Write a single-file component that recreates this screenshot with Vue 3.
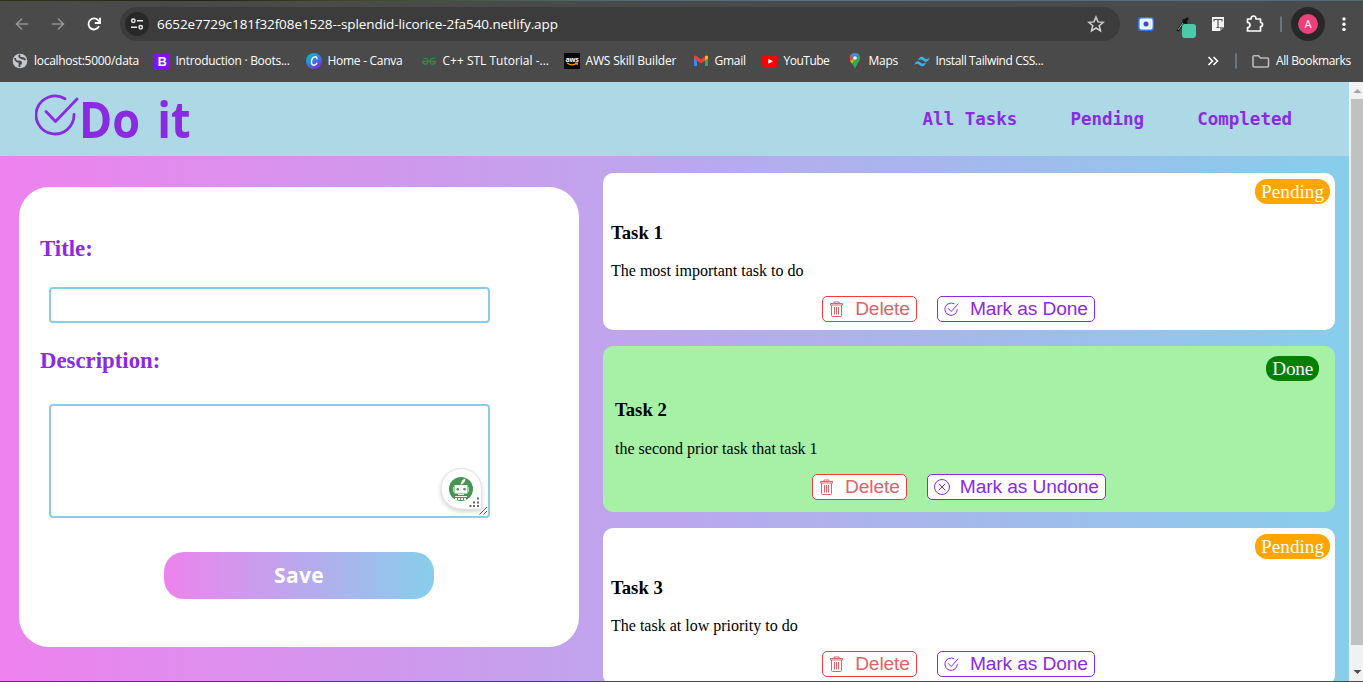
<script setup>
const bookmarks = [
  { icon: 'globe', text: 'localhost:5000/data' },
  { icon: 'boot', text: 'Introduction · Boots...' },
  { icon: 'canva', text: 'Home - Canva' },
  { icon: 'geeks', text: 'C++ STL Tutorial -...' },
  { icon: 'aws', text: 'AWS Skill Builder' },
  { icon: 'gmail', text: 'Gmail' },
  { icon: 'youtube', text: 'YouTube' },
  { icon: 'maps', text: 'Maps' },
  { icon: 'tailwind', text: 'Install Tailwind CSS...' },
]
const tasks = [
  { title: 'Task 1', text: 'The most important task to do', done: false },
  { title: 'Task 2', text: 'the second prior task that task 1', done: true },
  { title: 'Task 3', text: 'The task at low priority to do', done: false },
]
</script>

<template>
  <div class="window">
    <header class="chrome">
      <div class="strip"></div>
      <div class="toolbar">
        <svg class="nav-icons" width="120" height="34" viewBox="0 0 120 34" fill="none">
          <path d="M28 17H17M22 11.500L16.500 17L22 22.500" stroke="#929292" stroke-width="1.600" />
          <path d="M52 17H63M58 11.500L63.500 17L58 22.500" stroke="#929292" stroke-width="1.600" />
          <path d="M99 19.200A5.500 5.500 0 1 1 98 13.200L99.500 15" stroke="#fff" stroke-width="1.800" />
          <path d="M100 10.800V16H94.800" stroke="#fff" stroke-width="1.800" />
        </svg>
        <div class="address">
          <svg class="site" width="24" height="24" viewBox="0 0 24 24" fill="none">
            <circle cx="12" cy="12" r="12" fill="#282828" />
            <g stroke="#e8e8e8" stroke-width="1.500">
              <circle cx="8.300" cy="8.800" r="1.700" /><path d="M12 8.800H18M6 15.200H12" />
              <circle cx="15.700" cy="15.200" r="1.700" />
            </g>
          </svg>
          <span class="url">6652e7729c181f32f08e1528--splendid-licorice-2fa540.netlify.app</span>
          <svg class="star" width="18" height="18" viewBox="0 0 18 18"><path d="M9 2L11 6.900L16.200 7.300L12.200 10.700L13.500 15.800L9 13L4.500 15.800L5.800 10.700L1.800 7.300L7 6.900Z" fill="none" stroke="#d0d0d0" stroke-width="1.500" /></svg>
        </div>
        <svg class="extensions" width="243" height="34" viewBox="0 0 243 34" fill="none">
          <rect x="18.800" y="10.800" width="14.500" height="12.400" rx="2.500" fill="#fff" stroke="#2878f0" stroke-width="1.500" />
          <rect x="21" y="13.200" width="10" height="7.500" rx="1.500" fill="#e4efff" />
          <circle cx="26" cy="17" r="2.500" fill="#4648c8" />
          <path d="M57.500 24L64 15" stroke="#101816" stroke-width="2.600" /><path d="M58 23L63 16" stroke="#8ac4a0" />
          <path d="M63 12.500L67 16.500M65 14L68 11" stroke="#111" stroke-width="2.600" />
          <rect x="62" y="17" width="14" height="14" rx="3" fill="#4bc9a9" />
          <path d="M92 10H104V20L100 24H92Z" fill="#f4f4f4" /><path d="M104 20L100 24V20Z" fill="#888" />
          <path d="M94 14.500V12.500H102V14.500M98 12.500V20.500M96.500 20.500H99.500" stroke="#555" stroke-width="1.200" />
          <path d="M127.500 12H131Q131 9 133.500 9Q136 9 136 12H140.500V15.500Q142.500 15.500 142.500 17.500Q142.500 19.500 140.500 19.500V24H127.500V20.500Q130 20.500 130 18Q130 15.500 127.500 15.500Z" stroke="#fff" stroke-width="1.700" stroke-linejoin="round" />
          <path d="M161 9.500V25" stroke="#718292" stroke-width="1.600" />
          <circle cx="188" cy="17" r="17" fill="#282828" /><circle cx="188" cy="17" r="10" fill="#ec407a" />
          <text x="188" y="21" text-anchor="middle" font-family="Roboto, sans-serif" font-size="11" fill="#fff">A</text>
          <g fill="#fff"><circle cx="224" cy="12" r="1.700" /><circle cx="224" cy="17.200" r="1.700" /><circle cx="224" cy="22.400" r="1.700" /></g>
        </svg>
      </div>
      <div class="bookmarks">
        <div v-for="b in bookmarks" :key="b.text" class="bookmark" :class="b.icon">
          <svg width="16" height="16" viewBox="0 0 16 16" fill="none">
            <g v-if="b.icon === 'globe'"><circle cx="8" cy="8" r="7.300" fill="#c5c8cc" /><path d="M3 5Q3.500 9 7 8.500Q9.500 8.500 9 10.500H7.500V14M8 2Q6 4 9 5Q12 5 13.500 7" stroke="#484848" stroke-width="1.800" /></g>
            <g v-else-if="b.icon === 'boot'"><rect width="16" height="16" rx="1.500" fill="#7e13f8" /><text x="8" y="12.500" text-anchor="middle" font-family="Liberation Sans, sans-serif" font-size="12.500" font-weight="bold" fill="#fff">B</text></g>
            <g v-else-if="b.icon === 'canva'"><defs><linearGradient id="canva" x1="0" y1="0" x2=".7" y2="1"><stop stop-color="#00c4cc" /><stop offset=".5" stop-color="#2d8ade" /><stop offset="1" stop-color="#7d2ae8" /></linearGradient></defs><circle cx="8" cy="8" r="8" fill="url(#canva)" /><path d="M10.800 6.300Q11.400 4 9.300 3.800Q6.300 4 5.500 8Q5 12 8 12.200Q10 12.100 11.200 9.800" stroke="#fff" stroke-width="1.400" /></g>
            <g v-else-if="b.icon === 'geeks'" stroke="#2f8d46" stroke-width="1.300"><path d="M2.500 5.700Q7 4.500 7 8.500Q6.500 11.500 4 11Q1.500 10.500 1.500 8.400H14.500Q14.500 10.500 12 11Q9.500 11.500 9 8.500Q9 4.500 13.500 5.700" /></g>
            <g v-else-if="b.icon === 'aws'"><rect width="16" height="16" fill="#07080c" /><text x="8" y="8.600" text-anchor="middle" font-family="Open Sans, sans-serif" font-size="7" font-weight="bold" fill="#fff">aws</text><path d="M3 10Q8 13.500 13 10.300M11 10H13.500L13 12" stroke="#ff9900" stroke-width="1.200" /></g>
            <g v-else-if="b.icon === 'gmail'"><path d="M1 4V13H4V7.500Z" fill="#4285f4" /><path d="M12 7.500V13H15V4Z" fill="#34a853" /><path d="M1 3.200Q2 2 3.500 3L8 6.500L12 3.300V7.500L8 10.500L1 5.300Z" fill="#ea4335" /><path d="M12 3.300Q14 1.800 15 3.500V5.500L12 7.500Z" fill="#fbbc04" /></g>
            <g v-else-if="b.icon === 'youtube'"><rect y="2.500" width="16" height="11.500" rx="2.500" fill="#f00" /><path d="M6.300 5.700L11 8.200L6.300 10.700Z" fill="#fff" /></g>
            <g v-else-if="b.icon === 'maps'"><path d="M8 0Q13 0 13.200 5Q13 8 10.500 10.500Q9 13 8 16Q7 13 5 10.500Q3 8 2.800 5Q3 0 8 0" fill="#34a853" /><path d="M4 2L8 5L5 10.500Q2.500 7.500 2.800 4.500Z" fill="#fbbc04" /><path d="M3.900 2L7 5L3.700 8.500Q2 5 3.900 2" fill="#ea4335" /><path d="M4 2Q8 -2 12 2L6.500 7Z" fill="#4285f4" /><circle cx="8" cy="5" r="1.800" fill="#eef3ff" /></g>
            <path v-else d="M4 7.500Q5 3.500 8.200 3.700Q10 4.500 11 5.700Q13 7 15.800 4.500Q14.500 9 11.500 8.700Q9.500 8 8.500 7Q6.300 5.600 4 7.500M.2 12Q1.500 8 4.500 8.200Q6.300 9 7.300 10.200Q9.500 11.500 12 9Q11 13.500 7.800 13.200Q6 12.500 5 11.400Q3 10 .2 12" fill="#38b5ef" />
          </svg>
          <span>{{ b.text }}</span>
        </div>
        <svg class="overflow" width="70" height="20" viewBox="0 0 70 20" fill="none">
          <path d="M6.500 6L10.500 10L6.500 14M11.500 6L15.500 10L11.500 14" stroke="#fff" stroke-width="1.600" />
          <path d="M34 2.500V17.500" stroke="#718292" stroke-width="1.600" />
          <path d="M52 4.800H56.500L58.500 7H65.500Q66.500 7 66.500 8V15Q66.500 16 65.500 16H52Q51 16 51 15V5.800Q51 4.800 52 4.800" stroke="#bbb" stroke-width="1.600" />
        </svg>
        <span class="all">All Bookmarks</span>
      </div>
    </header>

    <div class="viewport">
      <div class="page">
        <nav class="topbar">
          <div class="logo">
            <svg width="44" height="42" viewBox="0 0 44 42" fill="none" stroke="#8a2be2" stroke-width="2.800" stroke-linecap="round" stroke-linejoin="round">
              <path d="M30 4.800A19 19 0 1 0 39 20.500M11 17.500L20.500 27.500L42 5" />
            </svg>
            <span>Do it</span>
          </div>
          <div class="links"><a>All Tasks</a><a>Pending</a><a>Completed</a></div>
        </nav>
        <main class="content">
          <form class="form" @submit.prevent>
            <label>Title:</label>
            <div class="field"></div>
            <label class="second">Description:</label>
            <div class="field area">
              <svg class="assistant" width="56" height="56" viewBox="0 0 56 56" fill="none">
                <path class="bubble" d="M49.500 28.500V49H29A20.250 20.250 0 1 1 49.500 28.500" fill="#fff" stroke="#e2e2e8" />
                <g transform="translate(1 1)">
                  <circle cx="28" cy="28" r="12" fill="#469653" />
                  <path d="M27.500 23.500Q28.500 18.500 32.500 17.500Q32 22 28.500 23.500" fill="#fff" />
                  <rect x="21.500" y="24" width="13" height="8.500" fill="#fff" /><path d="M20.500 26V31M35.500 26V31" stroke="#fff" stroke-opacity=".6" />
                  <circle cx="24.700" cy="28.200" r="1.300" fill="#469653" /><circle cx="31.500" cy="28.200" r="1.300" fill="#469653" />
                  <path d="M25 33.500H31M22 35.500H34" stroke="#fff" /><path d="M22 38H34" stroke="#fff" stroke-width="2" stroke-dasharray="2 1" />
                </g>
                <g fill="#666"><rect x="45" y="37.500" width="2" height="2" /><rect x="41" y="41.500" width="2" height="2" /><rect x="45" y="41.500" width="2" height="2" /><rect x="37.500" y="45" width="2" height="2" /><rect x="41" y="45" width="2" height="2" /><rect x="45" y="45" width="2" height="2" /></g>
                <path d="M47.500 54.500L55 47M51.500 54.500L55 51" stroke="#555" />
              </svg>
            </div>
            <button class="save">Save</button>
          </form>
          <section class="tasks">
            <article v-for="t in tasks" :key="t.title" class="task" :class="{ done: t.done }">
              <span class="badge">{{ t.done ? 'Done' : 'Pending' }}</span>
              <h3>{{ t.title }}</h3>
              <p>{{ t.text }}</p>
              <div class="actions">
                <button class="btn delete">
                  <svg width="16" height="16" viewBox="0 0 16 16" fill="none" stroke="currentColor"><path d="M1.500 2.500H13.500V4H1.500ZM5 2.500V1H10V2.500M2.500 4V14.500Q2.500 15.500 3.500 15.500H11.500Q12.500 15.500 12.500 14.500V4M5.500 6V13.500M7.500 6V13.500M9.500 6V13.500" /></svg>
                  <span>Delete</span>
                </button>
                <button class="btn mark">
                  <svg width="16" height="16" viewBox="0 0 16 16" fill="none" stroke="currentColor" stroke-linecap="round" stroke-linejoin="round">
                    <g v-if="t.done"><circle cx="8" cy="8" r="7.500" /><path d="M5 5L11 11M11 5L5 11" /></g>
                    <path v-else d="M10 2.700A6.200 6.200 0 1 0 13.300 8.500M4.300 7.500L7.200 10.500L14 3" />
                  </svg>
                  <span>{{ t.done ? 'Mark as Undone' : 'Mark as Done' }}</span>
                </button>
              </div>
            </article>
          </section>
        </main>
      </div>
      <div class="scrollbar">
        <svg width="14" height="17" viewBox="0 0 14 17"><path d="M4.500 11L8.500 7L12.500 11Z" fill="#a3a3a3" /></svg>
        <div class="thumb"></div>
        <svg class="down" width="14" height="17" viewBox="0 0 14 17"><path d="M4.500 6L8.500 10L12.500 6Z" fill="#505050" /></svg>
      </div>
    </div>
  </div>
</template>

<style>
html, body { overflow: hidden; }
</style>

<style scoped>
* { box-sizing: border-box; }
svg { display: block; flex: none; }
.window { width: 1363px; height: 682px; overflow: hidden; display: flex; flex-direction: column; background: #4a4a4a; }
.chrome { height: 82px; flex: none; background: #4a4a4a; color: #fff; font-family: "Open Sans", "Noto Sans", sans-serif; }
.strip { height: 1px; background: linear-gradient(to right, #2e3518, #26221c 15%, #3e4820 25%, #4d6c70 45%, #557086 60%, #506a78); }
.toolbar { display: flex; height: 40px; padding-top: 6px; }
.address { width: 1000px; height: 34px; border-radius: 17px; background: #3c3c3c; display: flex; align-items: center; padding: 0 15px 0 5px; }
.url { margin-left: 8px; font-size: 13.500px; line-height: 20px; letter-spacing: -.08px; white-space: nowrap; }
.star { margin-left: auto; }
.bookmarks { display: grid; grid-template-columns: 141.500px 152px 115px 143px 129px 69px 85px 67px 288px 71.500px 1fr; height: 39px; padding-left: 12px; align-items: center; font-size: 12px; white-space: nowrap; letter-spacing: -.28px; }
.bookmark { display: flex; align-items: center; gap: 6px; }
.geeks { letter-spacing: 0; }
.aws { letter-spacing: -.17px; }
.youtube { letter-spacing: -.5px; }
.tailwind { letter-spacing: -.37px; }
.all { padding-left: 3px; letter-spacing: -.4px; }
.viewport { height: 599px; display: flex; overflow: hidden; }
.page { width: 1349px; height: 599px; overflow: hidden; background: linear-gradient(to right, violet, skyblue); }
.topbar { height: 74px; background: lightblue; color: blueviolet; display: flex; justify-content: space-between; padding: 0 57px 0 35px; }
.logo { display: flex; align-items: flex-start; padding-top: 12px; font: bold 50px/50px "Open Sans", sans-serif; }
.logo span { margin-left: 0; white-space: nowrap; word-spacing: 6px; transform: scaleX(.9); transform-origin: left; }
.links { display: flex; gap: 53px; align-items: center; font: bold 17.500px "DejaVu Sans Mono", monospace; }
.content { display: flex; align-items: flex-start; }
.form { width: 560px; height: 460px; margin: 31px 24px 0 19px; border-radius: 30px; background: #fff; padding: 48px 21px 0; color: blueviolet; font-family: "Liberation Serif", serif; }
label { display: block; font-size: 22.800px; font-weight: bold; line-height: 28px; }
.field { width: 441px; height: 36px; margin: 24px 0 0 9px; border: 2px solid skyblue; border-radius: 4px; }
.second { margin-top: 24px; }
.area { height: 114px; margin-top: 29px; display: flex; justify-content: flex-end; align-items: flex-end; }
.bubble { filter: drop-shadow(0 2px 2px rgba(0, 0, 0, .18)); }
.save { display: block; width: 270px; height: 47px; margin: 34px 0 0 124px; border: 0; border-radius: 20px; background: linear-gradient(to right, violet, skyblue); color: #fff; font: bold 21px "Open Sans", sans-serif; letter-spacing: .3px; padding: 0 0 2px; }
.tasks { width: 732px; padding-top: 17px; display: flex; flex-direction: column; gap: 16px; font-family: "Liberation Serif", serif; }
.task { height: 157px; flex: none; border-radius: 10px; background: #fff; padding: 6px 5px 0 8px; display: flex; flex-direction: column; }
.badge { align-self: flex-end; height: 25px; padding: 0 6px; border-radius: 12px; background: orange; color: #fff; font-size: 19.200px; line-height: 25px; }
h3 { margin: 18px 0 0; font-size: 18.720px; line-height: 22px; }
p { margin: 18px 0 0; font-size: 16px; line-height: 18px; }
.actions { display: flex; justify-content: center; gap: 20px; margin: 16px 24px 0 0; }
.btn { height: 26px; border: 1px solid; border-radius: 5px; background: #fff; padding: 0 6px 0 6px; display: flex; align-items: center; gap: 10px; font: 19.200px/24px "Liberation Sans", sans-serif; letter-spacing: -.12px; white-space: nowrap; }
.delete { color: #dc6469; border-color: #f03c3c; }
.mark { color: blueviolet; }
.done { height: 166px; background: #a6f1a6; padding: 10px 16px 0 12px; }
.done .badge { background: green; letter-spacing: -.2px; }
.done h3 { margin-top: 18px; }
.done p { margin-top: 19px; }
.done .actions { margin-right: 16px; }
.scrollbar { width: 14px; height: 599px; background: #f1f1f1; display: flex; flex-direction: column; }
.thumb { width: 12px; height: 546px; margin-left: 2px; background: #c1c1c1; }
.down { margin-top: auto; }
</style>
